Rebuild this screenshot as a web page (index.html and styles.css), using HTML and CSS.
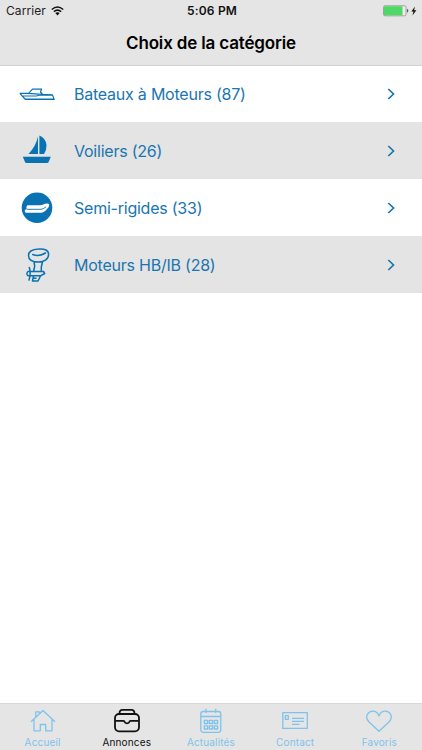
FILE: index.html
```html
<!DOCTYPE html>
<html lang="fr">
<head>
<meta charset="utf-8">
<title>Choix de la catégorie</title>
<link rel="stylesheet" href="styles.css">
</head>
<body>
<div class="app">
  <header class="header">
    <div class="status">
      <div class="carrier"><span>Carrier</span>
        <svg width="13" height="10" viewBox="0 0 13 10" fill="none" stroke="#111" stroke-width="1.6"><path d="M.8 3.5Q6.5-1.5 12.2 3.5M2.9 5.7Q6.5 2.6 10.1 5.7"/><path d="M4.3 7.1Q6.5 5.4 8.7 7.1L6.5 9.4Z" fill="#111" stroke="none"/></svg>
      </div>
      <div class="time">5:06 PM</div>
      <div class="power">
        <svg width="35" height="12" viewBox="0 0 35 12"><rect x=".5" y=".8" width="22.5" height="10" rx="1.5" fill="#eee" stroke="#8b8b8b" stroke-width=".8"/><rect x="1" y="1.3" width="18.5" height="9" rx=".8" fill="#4cd964"/><path d="M24 4q1.3.3 1.3 1.8T24 7.600Z" fill="#555"/><path d="M32 1.500 28.300 6.400h2.200L29.400 10.400 33.400 5.200h-2.300Z" fill="#111"/></svg>
      </div>
    </div>
    <h1 class="title">Choix de la catégorie</h1>
  </header>
  <main class="list">
    <a class="row first">
      <svg class="pic" viewBox="0 0 74 57" fill="none" stroke="#0872b3" stroke-width="1.200" stroke-linejoin="round"><path d="M19.800 27.300H28.500L32.500 23.200H42M33 23.200H41.500L40.500 26.300L42.500 28M28 27.300 42 28.300 52.500 28.900 54.200 33.500H25.500L19.800 27.300M23 30H36.500L39 29.200H52.500M24.500 33.200H54"/></svg>
      <span class="name">Bateaux à Moteurs (87)</span>
      <svg class="chev" width="8" height="12" viewBox="0 0 8 12"><path d="M1.300 1 6.500 6 1.300 11"/></svg>
    </a>
    <a class="row alt">
      <svg class="pic" viewBox="0 0 74 57" fill="#0872b3"><path d="M38 14.500v17.500H28.500Q36 24 38 14.500ZM39.400 13.600Q45.500 16 46.500 23Q46.800 28 44 32H39.400ZM22.800 34.800H50.800L48.600 40.100Q48.200 41 47 41H26.500Q25.300 41 25 40.100Z"/></svg>
      <span class="name">Voiliers (26)</span>
      <svg class="chev" width="8" height="12" viewBox="0 0 8 12"><path d="M1.300 1 6.500 6 1.300 11"/></svg>
    </a>
    <a class="row">
      <svg class="pic" viewBox="0 0 74 57"><circle cx="37" cy="28.700" r="15.300" fill="#0872b3"/><path d="M27.500 26.200H40Q43 26 45 24.800Q48.500 23.800 49.300 25.600Q49.500 27.800 47 30Q44 33.800 41 33.800H26Q24.300 33.300 24.800 31.500Q25.300 30.400 27 30.300Q25.500 28 27.500 26.200Z" fill="#fff"/><path d="M27 30.300H41Q43.500 30 46 27.800" fill="none" stroke="#0872b3" stroke-width=".9"/></svg>
      <span class="name">Semi-rigides (33)</span>
      <svg class="chev" width="8" height="12" viewBox="0 0 8 12"><path d="M1.300 1 6.500 6 1.300 11"/></svg>
    </a>
    <a class="row alt">
      <svg class="pic" viewBox="0 0 74 57" fill="none" stroke="#0872b3" stroke-width="1.500" stroke-linejoin="round" stroke-linecap="round"><path d="M38.500 13C45 12.500 48.600 14.300 48.600 18.300C48.600 23 44.500 26 38.500 26C32 26 28.500 23.500 28.500 19.500C28.500 15 33 13.300 38.500 13ZM32.700 18.500Q39 21 45.500 17M34 26 34.700 30 33.600 35.500M42.600 25.500 41.300 31V35.500M28 35.500Q25.800 37.600 28 39.800H40.500L44.700 37.500 43.500 35.500H28M29.300 31.500Q31.200 37.500 29 44M33.500 40 32.500 45H38L40.500 40M33 42.300H36"/></svg>
      <span class="name">Moteurs HB/IB (28)</span>
      <svg class="chev" width="8" height="12" viewBox="0 0 8 12"><path d="M1.300 1 6.500 6 1.300 11"/></svg>
    </a>
  </main>
  <nav class="tabs">
    <a class="tab">
      <svg class="glyph" viewBox="0 0 28 26"><path d="M2 13.700 14 2.500 26 13.700M5 11.500V22.800H11.300V16.500H16.700V22.800H23V11.500M6.800 9V3.800H10.500V5.500"/></svg>
      <span>Accueil</span>
    </a>
    <a class="tab active">
      <svg class="glyph thick" viewBox="0 0 28 26"><rect x="2" y="6" width="24" height="17.300" rx="4"/><path d="M6.500 5.500Q6.500 1.800 9.500 1.800H18.500Q21.500 1.800 21.500 5.500M2.500 12.800H10.300Q11 12.800 11.400 13.500Q12 15.300 14 15.300T16.600 13.500Q17 12.800 17.700 12.800H25.500"/></svg>
      <span>Annonces</span>
    </a>
    <a class="tab">
      <svg class="glyph" viewBox="0 0 28 26"><rect x="3.800" y="3.500" width="20" height="20.800" rx="2.500"/><path d="M4 8.500H23.800M9 .8V5M18.700 .8V5M7.300 12.300H10.600V15.500H7.300ZM12.300 12.300H15.600V15.500H12.300ZM17.300 12.300H20.600V15.500H17.300ZM7.300 17.800H10.600V21H7.300ZM12.300 17.800H15.600V21H12.300ZM17.300 17.800H20.600V21H17.300Z"/></svg>
      <span>Actualités</span>
    </a>
    <a class="tab">
      <svg class="glyph" viewBox="0 0 28 26"><path d="M1.800 4.600H26.300V20.400H1.800ZM4.300 7.700H7.300V11.300H4.300ZM11 10.300H23M11 13.300H23M11 16.300H18.500"/></svg>
      <span>Contact</span>
    </a>
    <a class="tab">
      <svg class="glyph" viewBox="0 0 28 26"><path d="M14 23.200 4 14Q.5 10 2.300 6.500Q4.500 2.700 8.500 3.200Q12.500 3.700 14 8Q15.500 3.700 19.500 3.200Q23.500 2.700 25.700 6.500Q27.500 10 24 14Z"/></svg>
      <span>Favoris</span>
    </a>
  </nav>
</div>
</body>
</html>
```
FILE: styles.css
```css
* { box-sizing: border-box; }
body { margin: 0; font-family: Inter, "Liberation Sans", sans-serif; background: #fff; }
.app { width: 422px; height: 750px; display: flex; flex-direction: column; overflow: hidden; }
.header { height: 66px; background: #e5e5e5; border-bottom: 1px solid #d2d2d2; flex: none; }
.status { height: 22px; display: grid; grid-template-columns: 1fr auto 1fr; align-items: center; padding: 0 4px 0 6px; }
.carrier { display: flex; align-items: center; gap: 5px; font-size: 12px; letter-spacing: .08px; color: #222; }
.carrier svg { margin-top: -1px; }
.carrier span, .time { padding-bottom: 1px; }
.time { font-size: 12px; font-weight: 600; letter-spacing: .2px; color: #111; }
.power { display: flex; justify-content: flex-end; }
.title { margin: 0; height: 43px; line-height: 43px; text-align: center; font-size: 17px; font-weight: 600; letter-spacing: -.16px; color: #000; }
.list { flex: 1; }
.row { height: 57px; display: flex; align-items: center; padding-right: 27px; color: #1a75b0; }
.first { height: 56px; }
.alt { background: #e4e4e4; }
.pic { width: 74px; height: 57px; flex: none; }
.name { flex: 1; font-size: 16px; letter-spacing: -.23px; white-space: nowrap; }
.chev { fill: none; stroke: #1a75b0; stroke-width: 1.7; }
.tabs { height: 47px; flex: none; display: grid; grid-template-columns: repeat(5, 84.2px); background: #e5e5e5; border-top: 1px solid #d8d8d8; padding-left: .5px; }
.tab { display: flex; flex-direction: column; align-items: center; padding-top: 4px; color: #7fc3eb; font-size: 10px; line-height: 12px; letter-spacing: .15px; }
.tab span { margin-top: 2px; }
.active { color: #111; }
.glyph { width: 28px; height: 26px; fill: none; stroke: currentColor; stroke-width: 1.3; stroke-linejoin: round; }
.thick { stroke-width: 1.8; }
```
